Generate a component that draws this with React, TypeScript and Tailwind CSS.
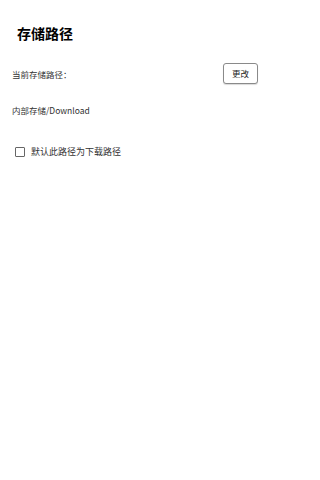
import { useState } from "react";

const font = { fontFamily: '"Noto Sans CJK SC", "Noto Sans", sans-serif' };

export default function App() {
  const [isDefault, setIsDefault] = useState(false);

  return (
    <div className="min-h-[480px] w-[269px] overflow-hidden bg-white text-[#222]" style={font}>
      {/* Header */}
      <h1 className="pl-[17px] pt-[24px] text-[14px] font-bold leading-[18px] text-black">存储路径</h1>

      {/* Current path */}
      <div className="mt-[21px] flex items-center justify-between pl-[12px] pr-[11px]">
        <span className="text-[8.5px] leading-[12px] text-[#333]">当前存储路径：</span>
        <button className="flex h-[21px] w-[35px] items-center justify-center rounded-[3px] border border-[#8a8a8a] bg-white text-[8.5px] text-[#222] shadow-[0_1px_1px_rgba(0,0,0,0.15)]">
          更改
        </button>
      </div>

      <div className="mt-[20px] pl-[12px] text-[8.5px] leading-[12px] text-[#333]">内部存储/Download</div>

      {/* Default checkbox */}
      <label className="mt-[30px] flex items-center gap-[6px] pl-[15px]">
        <input
          type="checkbox"
          checked={isDefault}
          onChange={(e) => setIsDefault(e.target.checked)}
          className="h-[10px] w-[10px] appearance-none rounded-[1px] border border-[#666] bg-white"
        />
        <span className="text-[9px] leading-[12px] text-[#333]">默认此路径为下载路径</span>
      </label>
    </div>
  );
}
